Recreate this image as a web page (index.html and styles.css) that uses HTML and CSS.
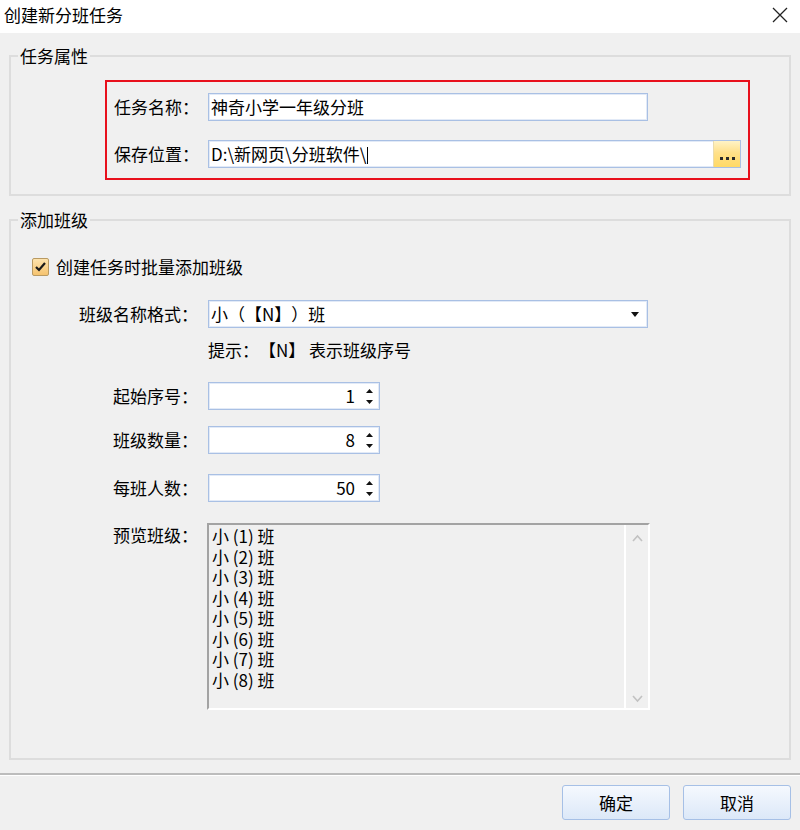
FILE: index.html
```html
<!DOCTYPE html>
<html lang="zh-CN">
<head>
<meta charset="utf-8">
<title>创建新分班任务</title>
<link rel="stylesheet" href="styles.css">
</head>
<body>
<div class="window">
  <div class="titlebar">
    <span class="title">创建新分班任务</span>
    <svg class="close" width="16" height="16" viewBox="0 0 16 16"><path d="M1 1 L15 15 M15 1 L1 15" stroke="#222" stroke-width="1.3" fill="none"/></svg>
  </div>
  <div class="client">
    <fieldset class="group group-task">
      <legend>任务属性</legend>
      <div class="highlight">
        <div class="row">
          <span class="lbl">任务名称：</span>
          <div class="field name-field">神奇小学一年级分班</div>
        </div>
        <div class="row">
          <span class="lbl">保存位置：</span>
          <div class="field path-field">
            <span class="path-text">D:\新网页\分班软件\<span class="caret"></span></span>
            <span class="browse"><i></i><i></i><i></i></span>
          </div>
        </div>
      </div>
    </fieldset>

    <fieldset class="group group-class">
      <legend>添加班级</legend>
      <div class="check-row">
        <span class="checkbox"><svg width="13" height="12" viewBox="0 0 13 12"><path d="M2 6 L5 9 L11 2" stroke="#1a1a1a" stroke-width="2.2" fill="none"/></svg></span>
        <span>创建任务时批量添加班级</span>
      </div>
      <div class="form-row row-select">
        <span class="flabel">班级名称格式：</span>
        <div class="field select"><span>小（【N】）班</span><svg width="8" height="5" viewBox="0 0 8 5"><path d="M0 0 H8 L4 5 Z" fill="#111"/></svg></div>
      </div>
      <div class="hint">提示：【N】 表示班级序号</div>
      <div class="form-row row-start">
        <span class="flabel">起始序号：</span>
        <div class="field spin"><span>1</span><svg class="spin-arrows" width="7" height="15" viewBox="0 0 7 15"><path d="M0 4 H7 L3.5 0 Z M0 11 H7 L3.5 15 Z" fill="#111"/></svg></div>
      </div>
      <div class="form-row row-count">
        <span class="flabel">班级数量：</span>
        <div class="field spin"><span>8</span><svg class="spin-arrows" width="7" height="15" viewBox="0 0 7 15"><path d="M0 4 H7 L3.5 0 Z M0 11 H7 L3.5 15 Z" fill="#111"/></svg></div>
      </div>
      <div class="form-row row-size">
        <span class="flabel">每班人数：</span>
        <div class="field spin"><span>50</span><svg class="spin-arrows" width="7" height="15" viewBox="0 0 7 15"><path d="M0 4 H7 L3.5 0 Z M0 11 H7 L3.5 15 Z" fill="#111"/></svg></div>
      </div>
      <div class="form-row row-list">
        <span class="flabel list-label">预览班级：</span>
        <div class="listbox">
          <div class="items">
            <div>小 (1) 班</div>
            <div>小 (2) 班</div>
            <div>小 (3) 班</div>
            <div>小 (4) 班</div>
            <div>小 (5) 班</div>
            <div>小 (6) 班</div>
            <div>小 (7) 班</div>
            <div>小 (8) 班</div>
          </div>
          <div class="scrollbar">
            <svg width="11" height="8" viewBox="0 0 11 8"><path d="M1 7 L5.5 2 L10 7" stroke="#c2c2c2" stroke-width="1.6" fill="none"/></svg>
            <svg width="11" height="8" viewBox="0 0 11 8"><path d="M1 1 L5.5 6 L10 1" stroke="#c2c2c2" stroke-width="1.6" fill="none"/></svg>
          </div>
        </div>
      </div>
    </fieldset>
  </div>
  <div class="footer">
    <button class="btn">确定</button>
    <button class="btn">取消</button>
  </div>
</div>
</body>
</html>
```

FILE: styles.css
```css
* { box-sizing: border-box; }
html, body { margin: 0; padding: 0; }
body {
  width: 800px;
  height: 830px;
  overflow: hidden;
  background: #f0f0f0;
  font-family: "Noto Sans CJK SC", "Microsoft YaHei", sans-serif;
  font-size: 17px;
  line-height: 20px;
  color: #000;
  text-spacing-trim: space-all;
}
.window {
  width: 800px;
  height: 830px;
  display: flex;
  flex-direction: column;
}
.titlebar {
  height: 33px;
  flex: none;
  background: #fff;
  display: flex;
  align-items: center;
  justify-content: space-between;
  padding: 0 12px 0 4px;
}
.title { margin-top: -4px; }
.close { margin-top: -3px; }

.client {
  flex: none;
  padding: 13px 9px 0;
}
.group {
  margin: 0;
  padding: 0;
  min-width: 0;
  border: 2px solid #dddddd;
}
.group legend {
  padding: 0 2px;
  margin-left: 7px;
  line-height: 20px;
}

.highlight {
  margin: 14px 0 14px 94px;
  width: 645px;
  border: 2px solid #e8101c;
  padding: 11px 7px 10px;
  display: flex;
  flex-direction: column;
  gap: 19px;
}
.row { display: flex; align-items: center; }
.lbl { width: 94px; flex: none; }

.field {
  height: 28px;
  border: 1px solid #a9c0e4;
  box-shadow: inset 0 0 0 1px #e2eaf7;
  background: #fff;
  line-height: 26px;
  padding: 0 2px;
}
.name-field { width: 440px; }
.path-field {
  width: 533px;
  display: flex;
  align-items: center;
  padding-right: 0;
}
.caret {
  display: inline-block;
  width: 1px;
  height: 17px;
  background: #000;
  vertical-align: -3px;
  margin-left: 1px;
}
.browse {
  margin-left: auto;
  width: 27px;
  height: 26px;
  border-left: 1px solid #eadcae;
  background: linear-gradient(#fff3c6 0%, #ffe089 45%, #ffd966 100%);
  display: flex;
  align-items: flex-end;
  justify-content: center;
  gap: 3px;
  padding-bottom: 7px;
}
.browse i {
  display: block;
  width: 3px;
  height: 3px;
  background: #2a2a2a;
}

.group-class {
  margin-top: 14px;
  padding-bottom: 48px;
}
.check-row {
  margin-top: 27px;
  padding-left: 21px;
  display: flex;
  align-items: center;
  gap: 7px;
}
.checkbox {
  width: 17px;
  height: 18px;
  border: 1px solid #b99a62;
  border-radius: 2px;
  background: linear-gradient(#fde3ad, #f5c36f);
  display: flex;
  align-items: center;
  justify-content: center;
}
.form-row { display: flex; align-items: center; }
.flabel {
  width: 187px;
  flex: none;
  text-align: right;
  margin-right: 10px;
}
.row-select { margin-top: 23px; }
.select {
  width: 440px;
  display: flex;
  align-items: center;
  justify-content: space-between;
  padding-right: 8px;
}
.hint {
  margin-top: 12px;
  padding-left: 197px;
}
.row-start { margin-top: 22px; }
.row-count { margin-top: 16px; }
.row-size { margin-top: 20px; }
.spin {
  width: 172px;
  display: flex;
  align-items: center;
  justify-content: flex-end;
  padding-right: 6px;
}
.spin-arrows { margin-left: 11px; }

.row-list {
  margin-top: 21px;
  align-items: flex-start;
}
.list-label { margin-top: 2px; }
.listbox {
  width: 443px;
  height: 187px;
  margin-left: -1px;
  border-top: 2px solid #a3a3a3;
  border-left: 2px solid #a3a3a3;
  border-right: 2px solid #fff;
  border-bottom: 2px solid #fff;
  display: flex;
}
.items {
  flex: 1;
  padding: 1px 3px 0;
  line-height: 20.5px;
}
.scrollbar {
  width: 24px;
  border-left: 2px solid #fff;
  display: flex;
  flex-direction: column;
  justify-content: space-between;
  align-items: center;
  padding: 9px 0 5px;
}

.footer {
  flex: 1;
  margin-top: 13px;
  border-top: 2px solid #bcbcbc;
  box-shadow: inset 0 1px 0 #ffffff;
  padding: 10px 9px 0;
  display: flex;
  justify-content: flex-end;
  align-items: flex-start;
  gap: 13px;
}
.btn {
  width: 108px;
  height: 35px;
  border: 1px solid #a6c0e6;
  border-radius: 3px;
  background: linear-gradient(#f5f9fe, #dce8f8);
  font-family: inherit;
  font-size: 17px;
  color: #000;
  padding: 0;
}
```
